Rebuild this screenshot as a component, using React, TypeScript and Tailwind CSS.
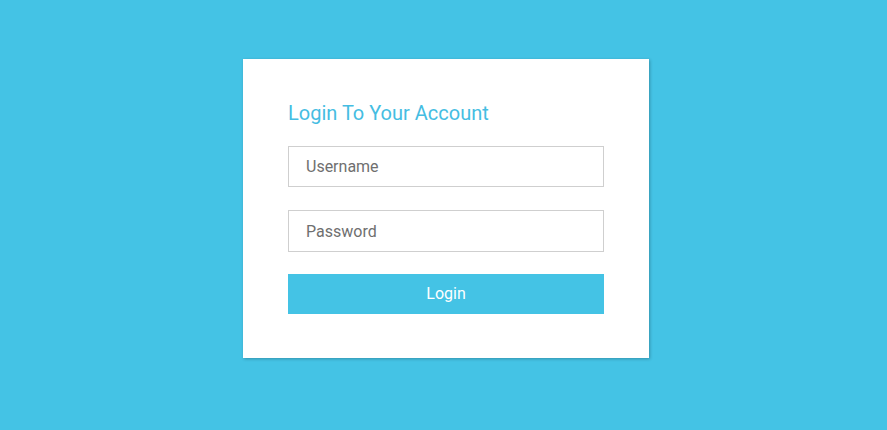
import React from "react";

export default function App() {
  return (
    <div className="min-h-[430px] w-full bg-[#44c3e5] flex justify-center pl-[5px] pt-[59px] font-['Roboto',sans-serif]">
      <div className="w-[406px] h-[299px] bg-white px-[45px] pt-[42px] shadow-[1px_1px_3px_rgba(0,0,0,0.25)]">
        <h1 className="text-[20px] leading-[24px] text-[#45bde2]">Login To Your Account</h1>
        <form className="mt-[21px] flex flex-col">
          <input
            type="text"
            placeholder="Username"
            className="h-[41px] w-[316px] border border-[#cfcfcf] px-[17px] text-[16px] text-[#555] placeholder:text-[#6f6f6f] outline-none"
          />
          <input
            type="password"
            placeholder="Password"
            className="mt-[23px] h-[42px] w-[316px] border border-[#cfcfcf] px-[17px] text-[16px] text-[#555] placeholder:text-[#6f6f6f] outline-none"
          />
          <button
            type="button"
            className="mt-[22px] h-[40px] w-[316px] bg-[#44c3e5] text-white text-[16px]"
          >
            Login
          </button>
        </form>
      </div>
    </div>
  );
}
